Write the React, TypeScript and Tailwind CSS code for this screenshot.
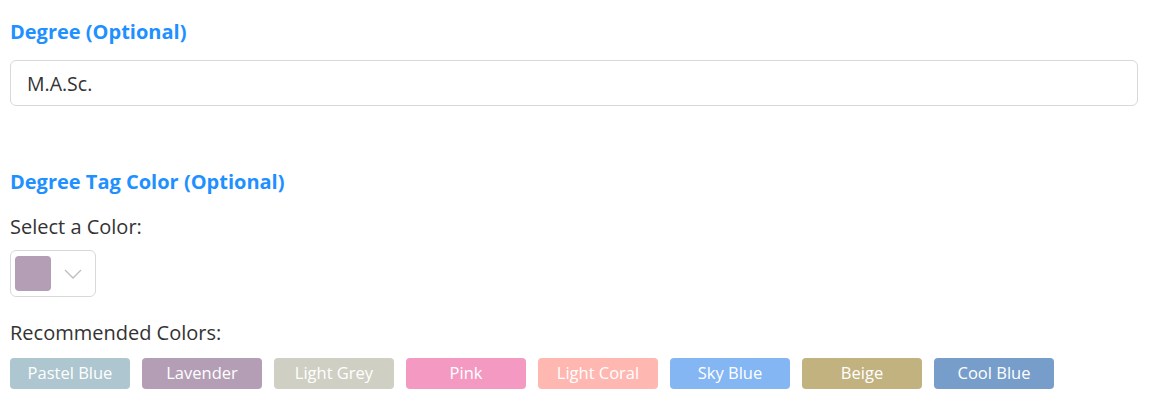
const tags = [
  { name: 'Pastel Blue', color: 'bg-[#aec6cf]' },
  { name: 'Lavender', color: 'bg-[#b39eb5]' },
  { name: 'Light Grey', color: 'bg-[#cfcfc4]' },
  { name: 'Pink', color: 'bg-[#f49ac2]' },
  { name: 'Light Coral', color: 'bg-[#ffb7b2]' },
  { name: 'Sky Blue', color: 'bg-[#84b6f4]' },
  { name: 'Beige', color: 'bg-[#c2b280]' },
  { name: 'Cool Blue', color: 'bg-[#779ecb]' },
];

export default function App() {
  return (
    <div className="min-h-[411px] bg-white pr-[20px] pl-[10px] pt-[19px] text-[#333] [font-family:'Open_Sans',sans-serif]">
      <label className="block text-[20px] leading-[26px] font-bold text-[#1e90ff]">Degree (Optional)</label>
      <input
        readOnly
        value="M.A.Sc."
        className="mt-[15px] block h-[46px] w-full rounded-[6px] border border-[#d9d9d9] px-[16px] text-[19.5px] text-[#333] outline-none"
      />

      <label className="mt-[63px] block text-[20px] leading-[26px] font-bold text-[#1e90ff]">Degree Tag Color (Optional)</label>
      <p className="mt-[19px] text-[20px] leading-[26px]">Select a Color:</p>
      <div className="mt-[10px] flex h-[47px] w-[86px] items-center gap-[13px] rounded-[6px] border border-[#d9d9d9] pl-[4px]">
        <div className="h-[35px] w-[36px] rounded-[4px] bg-[#b39eb5]" />
        <svg width="18" height="12" viewBox="0 0 18 12" fill="none" stroke="#bdbdbd" strokeWidth="1.3">
          <path d="M1 2l8 8 8-8" />
        </svg>
      </div>

      <p className="mt-[23px] text-[20px] leading-[26px]">Recommended Colors:</p>
      <div className="mt-[12px] flex gap-[12px]">
        {tags.map((t) => (
          <div
            key={t.name}
            className={`flex h-[31px] w-[120px] items-center justify-center rounded-[4px] text-[16.5px] text-white ${t.color}`}
          >
            {t.name}
          </div>
        ))}
      </div>
    </div>
  );
}
